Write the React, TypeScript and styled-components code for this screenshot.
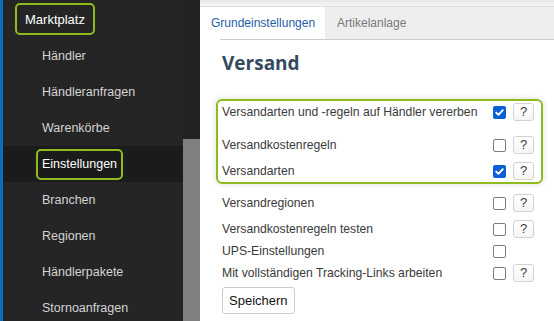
import React from 'react';
import styled, { createGlobalStyle } from 'styled-components';

const GREEN = '#8fbc1c';

const GlobalStyle = createGlobalStyle`
  html, body {
    margin: 0;
    padding: 0;
    overflow: hidden;
    background: #ffffff;
  }
`;

const Shell = styled.div`
  display: flex;
  width: 554px;
  height: 321px;
  overflow: hidden;
`;

const Stripe = styled.div`
  width: 3px;
  background: #0a6ebd;
`;

const Nav = styled.nav`
  width: 180px;
  background: #252525;
  display: flex;
  flex-direction: column;
  font-family: 'Liberation Sans', Arial, sans-serif;
`;

const NavHeader = styled.div`
  height: 38px;
  display: flex;
  align-items: center;
  padding-left: 12px;
  flex-shrink: 0;
`;

const HeaderLabel = styled.span`
  display: flex;
  align-items: center;
  height: 28px;
  padding: 0 8px;
  border: 2px solid ${GREEN};
  border-radius: 5px;
  color: #ffffff;
  font-size: 13px;
`;

const NavItem = styled.div<{ $active?: boolean }>`
  height: 36px;
  display: flex;
  align-items: center;
  padding-left: 33px;
  flex-shrink: 0;
  background: ${(p) => (p.$active ? '#1b1b1b' : 'transparent')};
`;

const NavLabel = styled.span<{ $active?: boolean }>`
  display: flex;
  align-items: center;
  height: 27px;
  padding: 0 4px;
  border: 2px solid ${(p) => (p.$active ? GREEN : 'transparent')};
  border-radius: 5px;
  color: ${(p) => (p.$active ? '#ffffff' : '#d4d4d4')};
  font-size: 12.5px;
`;

const ScrollTrack = styled.div`
  width: 17px;
  background: #222222;
  display: flex;
  flex-direction: column;
`;

const ScrollThumb = styled.div`
  margin-top: 139px;
  flex: 1;
  background: #808080;
`;

const Main = styled.main`
  flex: 1;
  display: flex;
  flex-direction: column;
  background: #ffffff;
  font-family: 'Liberation Sans', Arial, sans-serif;
`;

const TopStrip = styled.div`
  height: 6px;
  background: linear-gradient(#e6e6e6, #f6f6f6);
  border-bottom: 1px solid #dddddd;
`;

const TabBar = styled.div`
  height: 32px;
  display: flex;
`;

const Tab = styled.div<{ $active?: boolean }>`
  display: flex;
  align-items: center;
  font-size: 12px;
  ${(p) =>
    p.$active
      ? `width: 114px; padding-left: 11px; background: #ffffff; color: #1d5ea6;`
      : `flex: 1; padding-left: 12px; background: #eeeeee; color: #7a7a7a;`}
`;

const Rule = styled.div`
  height: 1px;
  margin-left: 20px;
  background: #cccccc;
`;

const Body = styled.div`
  padding: 0 20px 0 22px;
  display: flex;
  flex-direction: column;
`;

const Heading = styled.h2`
  margin: 10px 0 0;
  height: 26px;
  line-height: 26px;
  font-family: 'Open Sans', sans-serif;
  font-weight: 700;
  font-size: 19px;
  color: #34495e;
`;

const Group = styled.div`
  margin: 23px -9px 0 -6px;
  padding: 0 7px 0 4px;
  border: 2px solid ${GREEN};
  border-radius: 6px;
  box-shadow: 0 0 7px rgba(0, 0, 0, 0.14);
  display: flex;
  flex-direction: column;
  gap: 4px;
`;

const List = styled.div`
  margin-top: 8px;
  display: flex;
  flex-direction: column;
  gap: 4px;
`;

const Row = styled.div<{ $short?: boolean; $spaced?: boolean }>`
  height: ${(p) => (p.$short ? '14px' : '22px')};
  margin-bottom: ${(p) => (p.$spaced ? '7px' : '0')};
  display: flex;
  align-items: center;
  font-size: 12.2px;
  color: #3a3a3a;
`;

const Label = styled.span`
  flex: 1;
`;

const Box = styled.span<{ $checked?: boolean }>`
  box-sizing: border-box;
  width: 13px;
  height: 13px;
  display: flex;
  align-items: center;
  justify-content: center;
  border-radius: 2px;
  border: ${(p) => (p.$checked ? 'none' : '1.5px solid #7a7a80')};
  background: ${(p) => (p.$checked ? '#0d5fd6' : '#ffffff')};
`;

const HelpSlot = styled.div`
  width: 21px;
  margin-left: 7px;
  display: flex;
`;

const HelpButton = styled.button`
  width: 21px;
  height: 18px;
  padding: 0;
  border: 1px solid #d2d2d2;
  border-radius: 3px;
  background: linear-gradient(#ffffff, #f5f5f5);
  color: #3c3c3c;
  font-family: 'Liberation Sans', Arial, sans-serif;
  font-size: 13px;
  line-height: 16px;
`;

const SaveButton = styled.button`
  align-self: flex-start;
  margin-top: 3px;
  height: 27px;
  padding: 0 6px;
  border: 1px solid #cccccc;
  border-radius: 3px;
  background: #ffffff;
  color: #111111;
  font-family: 'Liberation Sans', Arial, sans-serif;
  font-size: 13px;
`;

type Setting = { label: string; checked?: boolean; help?: boolean };

const grouped: Setting[] = [
  { label: 'Versandarten und -regeln auf Händler vererben', checked: true, help: true },
  { label: 'Versandkostenregeln', help: true },
  { label: 'Versandarten', checked: true, help: true },
];

const others: Setting[] = [
  { label: 'Versandregionen', help: true },
  { label: 'Versandkostenregeln testen', help: true },
  { label: 'UPS-Einstellungen' },
  { label: 'Mit vollständigen Tracking-Links arbeiten', help: true },
];

const navItems = [
  'Händler',
  'Händleranfragen',
  'Warenkörbe',
  'Einstellungen',
  'Branchen',
  'Regionen',
  'Händlerpakete',
  'Stornoanfragen',
];

const Checkbox = ({ checked }: { checked?: boolean }) => (
  <Box $checked={checked} role="checkbox" aria-checked={!!checked}>
    {checked && (
      <svg width="11" height="11" viewBox="0 0 11 11">
        <path d="M2.2 5.6 L4.4 7.8 L8.8 3.2" fill="none" stroke="#fff" strokeWidth="1.9" strokeLinecap="round" strokeLinejoin="round" />
      </svg>
    )}
  </Box>
);

const SettingRow = ({ s, spaced }: { s: Setting; spaced?: boolean }) => (
  <Row $short={!s.help} $spaced={spaced}>
    <Label>{s.label}</Label>
    <Checkbox checked={s.checked} />
    <HelpSlot>{s.help && <HelpButton>?</HelpButton>}</HelpSlot>
  </Row>
);

export default function App() {
  return (
    <Shell>
      <GlobalStyle />
      <Stripe />
      <Nav>
        <NavHeader>
          <HeaderLabel>Marktplatz</HeaderLabel>
        </NavHeader>
        {navItems.map((item) => {
          const active = item === 'Einstellungen';
          return (
            <NavItem key={item} $active={active}>
              <NavLabel $active={active}>{item}</NavLabel>
            </NavItem>
          );
        })}
      </Nav>
      <ScrollTrack>
        <ScrollThumb />
      </ScrollTrack>
      <Main>
        <TopStrip />
        <TabBar>
          <Tab $active>Grundeinstellungen</Tab>
          <Tab>Artikelanlage</Tab>
        </TabBar>
        <Rule />
        <Body>
          <Heading>Versand</Heading>
          <Group>
            {grouped.map((s, i) => (
              <SettingRow key={s.label} s={s} spaced={i === 0} />
            ))}
          </Group>
          <List>
            {others.map((s) => (
              <SettingRow key={s.label} s={s} />
            ))}
          </List>
          <SaveButton>Speichern</SaveButton>
        </Body>
      </Main>
    </Shell>
  );
}
